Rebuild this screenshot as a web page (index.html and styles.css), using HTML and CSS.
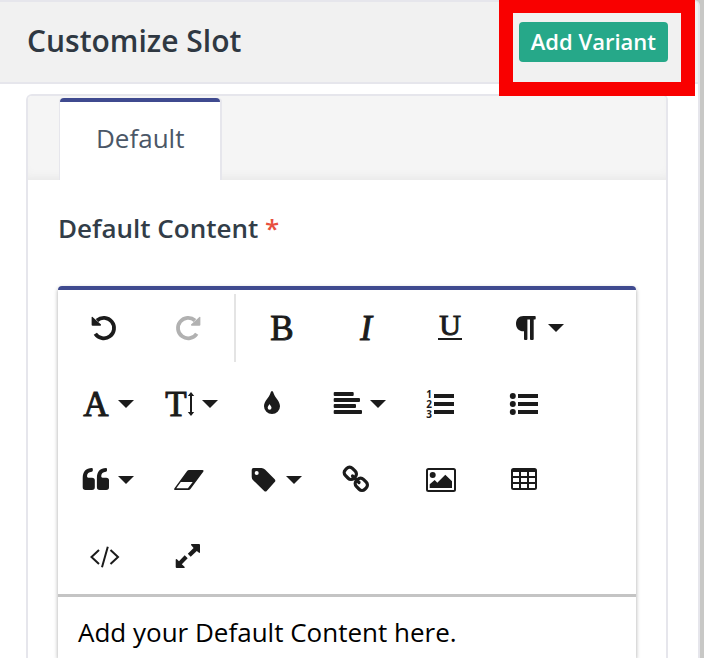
FILE: index.html
```html
<!DOCTYPE html>
<html lang="en">
<head>
<meta charset="utf-8">
<title>Customize Slot</title>
<link rel="stylesheet" href="styles.css">
</head>
<body>
<main class="panel">
  <header class="panel-header">
    <h1 class="title">Customize Slot</h1>
    <div class="highlighted">
      <button type="button" class="add-button">Add Variant</button>
    </div>
  </header>
  <section class="card">
    <div class="tabs" role="tablist">
      <button type="button" class="tab" role="tab" aria-selected="true">Default</button>
    </div>
    <div class="card-body">
      <label class="field-label" for="content">Default Content <span class="required">*</span></label>
      <div class="editor">
        <div class="toolbar" role="toolbar">
          <button type="button" class="tool" aria-label="Undo"><svg viewBox="0 0 76 76"><path class="line" stroke-width="3.8" d="M29.300 43.700A10.200 10.200 0 1 0 31 30.500"/><path d="M26.600 27L35 34.600Q35.200 35.800 34.200 35.800H26.700Q25.600 35.800 25.600 34.700V27.400Q25.800 26.400 26.600 27Z"/></svg></button>
          <button type="button" class="tool" aria-label="Redo" disabled><svg viewBox="0 0 76 76"><path class="line" stroke-width="3.800" d="M46.700 43.700A10.200 10.200 0 1 1 45 30.500"/><path d="M49.400 27L41 34.600Q40.800 35.800 41.800 35.800H49.300Q50.400 35.800 50.400 34.700V27.400Q50.200 26.400 49.400 27Z"/></svg></button>
          <span class="separator"></span>
          <button type="button" class="tool" aria-label="Bold"><svg viewBox="0 0 76 76"><text class="letter" x="38" y="50">B</text></svg></button>
          <button type="button" class="tool" aria-label="Italic"><svg viewBox="0 0 76 76"><text class="letter italic" x="38" y="50">I</text></svg></button>
          <button type="button" class="tool" aria-label="Underline"><svg viewBox="0 0 76 76"><text class="letter small" x="38" y="45">U</text><path d="M26 48H50V50H26Z"/></svg></button>
          <button type="button" class="tool" aria-label="Paragraph format"><svg viewBox="0 0 76 76"><path d="M27.500 26H39Q39.700 26 39.700 27V28.500Q39.700 29.500 39 29.500H37.700V49Q37.700 50 36.700 50H35Q34 50 34 49V29.500H31.400V49Q31.400 50 30.400 50H29Q28 50 28 49V41.300H27.500C22.700 41.300 20 38 20 33.700S22.700 26 27.500 26Z"/><path d="M52 34H68L60 42Z"/></svg></button>
          <button type="button" class="tool" aria-label="Font family"><svg viewBox="0 0 76 76"><text class="letter" x="30" y="50">A</text><path d="M52 34H68L60 42Z"/></svg></button>
          <button type="button" class="tool" aria-label="Font size"><svg viewBox="0 0 76 76"><text class="letter" x="26" y="50">T</text><path d="M41 26L44.200 30H42V46H44.200L41 50L37.800 46H40V30H37.800Z"/><path d="M52 34H68L60 42Z"/></svg></button>
          <button type="button" class="tool" aria-label="Colors"><svg viewBox="0 0 76 76"><path fill-rule="evenodd" d="M38 25C38.800 25 39.200 26 39.500 27C41 32 46 35 46 40.300A8 7.800 0 0 1 30 40.300C30 35 35 32 36.500 27C36.800 26 37.200 25 38 25ZM35.500 38C35 39.400 33.700 40.300 33.700 41.700A1.900 2 0 0 0 37.500 41.700C37.500 40.300 36 39.400 35.500 38Z"/></svg></button>
          <button type="button" class="tool" aria-label="Align"><svg viewBox="0 0 76 76"><rect x="15.700" y="26" width="20" height="4" rx="1"/><rect x="15.700" y="32" width="26.300" height="4" rx="1"/><rect x="15.700" y="38" width="22.300" height="4" rx="1"/><rect x="15.700" y="44" width="28.300" height="4" rx="1"/><path d="M52 34H68L60 42Z"/></svg></button>
          <button type="button" class="tool" aria-label="Ordered list"><svg viewBox="0 0 76 76"><text class="digit" x="27" y="32">1</text><text class="digit" x="27" y="42">2</text><text class="digit" x="27" y="52">3</text><path d="M32 28H52V32H32ZM32 36H52V40H32ZM32 44H52V48H32Z"/></svg></button>
          <button type="button" class="tool" aria-label="Unordered list"><svg viewBox="0 0 76 76"><circle cx="26.800" cy="30" r="3"/><circle cx="26.800" cy="38" r="3"/><circle cx="26.800" cy="46" r="3"/><path d="M32 28H52V32H32ZM32 36H52V40H32ZM32 44H52V48H32Z"/></svg></button>
          <button type="button" class="tool" aria-label="Quote"><svg viewBox="0 0 76 76"><path id="quote-mark" d="M25.800 26Q26.800 26 26.800 27V28.600Q26.800 29.600 25.800 29.700C22.700 30 21 31.500 21 34.300Q21 35.700 22.300 35.700H26Q28.800 35.700 28.800 38.300V45.300Q28.800 48 26 48H19.500Q16.700 48 16.700 45.300V36C16.700 29.500 20 26 25.800 26Z"/><use href="#quote-mark" x="14.200"/><path d="M52 34H68L60 42Z"/></svg></button>
          <button type="button" class="tool" aria-label="Clear formatting"><svg viewBox="0 0 76 76"><path fill-rule="evenodd" d="M39 28H52.500Q54.200 28 53.400 29.600L40.300 47.200Q39.600 48 38.600 48H25Q23.600 48 24.300 46.400L37.300 28.800Q38 28 39 28ZM30.800 40L26.300 46.300H37.900L42.700 40Z"/></svg></button>
          <button type="button" class="tool" aria-label="Tags"><svg viewBox="0 0 76 76"><path fill-rule="evenodd" d="M19.500 26H27.500Q29.400 26 31 27.600L40.700 37.300Q42 38.700 40.700 40L32.700 49Q31.500 50.200 30.200 49L19.400 38.500Q17.700 37 17.700 35V28Q17.700 26 19.500 26ZM22.700 29.100A2 2 0 1 0 22.700 33.100A2 2 0 1 0 22.700 29.100Z"/><path d="M52 34H68L60 42Z"/></svg></button>
          <button type="button" class="tool" aria-label="Insert link"><svg viewBox="0 0 76 76"><g class="line" stroke-width="3.200"><rect x="26.300" y="26.300" width="12" height="10" rx="4" transform="rotate(45 32.300 31.300)"/><rect x="37.300" y="37.300" width="12" height="10" rx="4" transform="rotate(45 43.300 42.300)"/><path d="M34.500 34L41 40.500" stroke-linecap="round"/></g></svg></button>
          <button type="button" class="tool" aria-label="Insert image"><svg viewBox="0 0 76 76"><rect class="line" stroke-width="2" x="25" y="27" width="28" height="22" rx="1.500"/><circle cx="30.700" cy="33" r="3"/><path d="M27.700 46V42.300L32.700 38L35.300 40.700L43.300 32.700L50 39.300V46Z"/></svg></button>
          <button type="button" class="tool" aria-label="Insert table"><svg viewBox="0 0 76 76"><path fill-rule="evenodd" d="M27.500 26H48.500Q51 26 51 28.500V45.500Q51 48 48.500 48H27.500Q25 48 25 45.500V28.500Q25 26 27.500 26ZM27 30V34H33V30ZM35 30V34H41V30ZM43 30V34H49V30ZM27 36V40H33V36ZM35 36V40H41V36ZM43 36V40H49V36ZM27 42V46H33V42ZM35 42V46H41V42ZM43 42V46H49V42Z"/></svg></button>
          <button type="button" class="tool" aria-label="Code view"><svg viewBox="0 0 76 76"><path class="line" stroke-width="2" d="M33 32L25.500 39L33 46M44.500 32L52 39L44.500 46M41.800 28.700L36 49.300"/></svg></button>
          <button type="button" class="tool" aria-label="Fullscreen"><svg viewBox="0 0 76 76"><path d="M41.500 26H49Q50 26 50 27V34.500Q49.500 35.400 48.700 34.600L46.800 32.900L40.700 38.700L37.800 35.800L43.600 29.900L41.200 27.300Q40.600 26.400 41.500 26ZM25.700 41.500Q26.300 40.600 27.200 41.400L29 43.200L34.700 37.200L37.700 40.200L31.800 46.200L34.500 48.700Q35.200 49.600 34.300 50H26.700Q25.700 50 25.700 49Z"/></svg></button>
        </div>
        <textarea class="editor-text" id="content" rows="1">Add your Default Content here.</textarea>
      </div>
    </div>
  </section>
</main>
</body>
</html>
```
FILE: styles.css
```css
* { box-sizing: border-box; }

body {
  margin: 0;
  padding-right: 4px;
  background: #c8c8c6;
  font-family: "Open Sans", sans-serif;
  color: #323d48;
}

button, textarea { font: inherit; }

.panel {
  min-height: 100vh;
  background: #fff;
  border: 2px solid #e6e6ec;
  border-width: 2px 2px 0 0;
  border-top-right-radius: 6px;
}

.panel-header {
  display: flex;
  justify-content: space-between;
  align-items: center;
  padding: 20px 30px 20px 27px;
  background: #f1f1f1;
  border-bottom: 2px solid #e6e6ec;
  border-top-right-radius: 4px;
}

.title {
  margin: 0;
  font-size: 30px;
  line-height: 38px;
  padding-bottom: 2px;
  font-weight: 600;
  color: #2f3842;
}

.highlighted { position: relative; }

.highlighted::after {
  content: "";
  position: absolute;
  inset: -23px -27px -34px -20px;
  border: 14px solid #f90000;
  pointer-events: none;
}

.add-button {
  display: block;
  height: 40px;
  padding: 0 12px 2px;
  border: 0;
  border-radius: 4px;
  background: #26a889;
  color: #fff;
  font-size: 22px;
  line-height: 38px;
  font-weight: 600;
}

.card {
  margin: 10px 30px 0 26px;
  border: 2px solid #e6e6ec;
  border-bottom: 0;
  border-radius: 6px 6px 0 0;
}

.tabs {
  display: flex;
  padding: 2px 32px 0;
  background: #f5f5f5;
  box-shadow: inset 0 -8px 12px -8px #e2e2e2;
  border-radius: 4px 4px 0 0;
}

.tab {
  height: 82px;
  padding: 0 36px 6px;
  border: 0;
  border-top: 4px solid #3f4a8f;
  border-radius: 4px 4px 0 0;
  background: #fff;
  box-shadow: -1px 0 #e6e6ec, 2px 0 #e6e6ec;
  color: #4b5767;
  font-size: 26px;
  line-height: 36px;
}

.card-body { padding: 30px 30px 0; }

.field-label {
  display: block;
  font-size: 26px;
  line-height: 36px;
  font-weight: 600;
  margin-bottom: 40px;
}

.required { color: #e8503f; }

.editor {
  border-top: 4px solid #3f4a8f;
  border-radius: 4px 4px 0 0;
  box-shadow: 0 2px 4px #a8a8a8;
}

.toolbar {
  display: flex;
  flex-wrap: wrap;
  column-gap: 8px;
  padding: 0 8px;
  border-bottom: 3px solid #c4c4c4;
  background: #fff;
}

.tool {
  width: 76px;
  height: 76px;
  padding: 0;
  border: 0;
  background: none;
  color: #1b1b1b;
}

.tool:disabled { color: #b1b1b1; }

.tool svg {
  display: block;
  width: 76px;
  height: 76px;
  fill: currentColor;
}

.tool .line {
  fill: none;
  stroke: currentColor;
}

.separator {
  width: 2px;
  margin: 4px 0;
  background: #e4e4e4;
}

.letter {
  font: 35px "Liberation Serif", serif;
  text-anchor: middle;
  stroke: currentColor;
  stroke-width: 1px;
}

.italic { font-style: italic; }
.small { font-size: 30px; }

.digit {
  font: bold 10px "Open Sans", sans-serif;
  text-anchor: middle;
}

.editor-text {
  display: block;
  width: 100%;
  height: 61px;
  padding: 17px 20px 0;
  border: 0;
  outline: 0;
  resize: none;
  overflow: hidden;
  background: #fff;
  color: #000;
  font-size: 26px;
  line-height: 36px;
}
```
